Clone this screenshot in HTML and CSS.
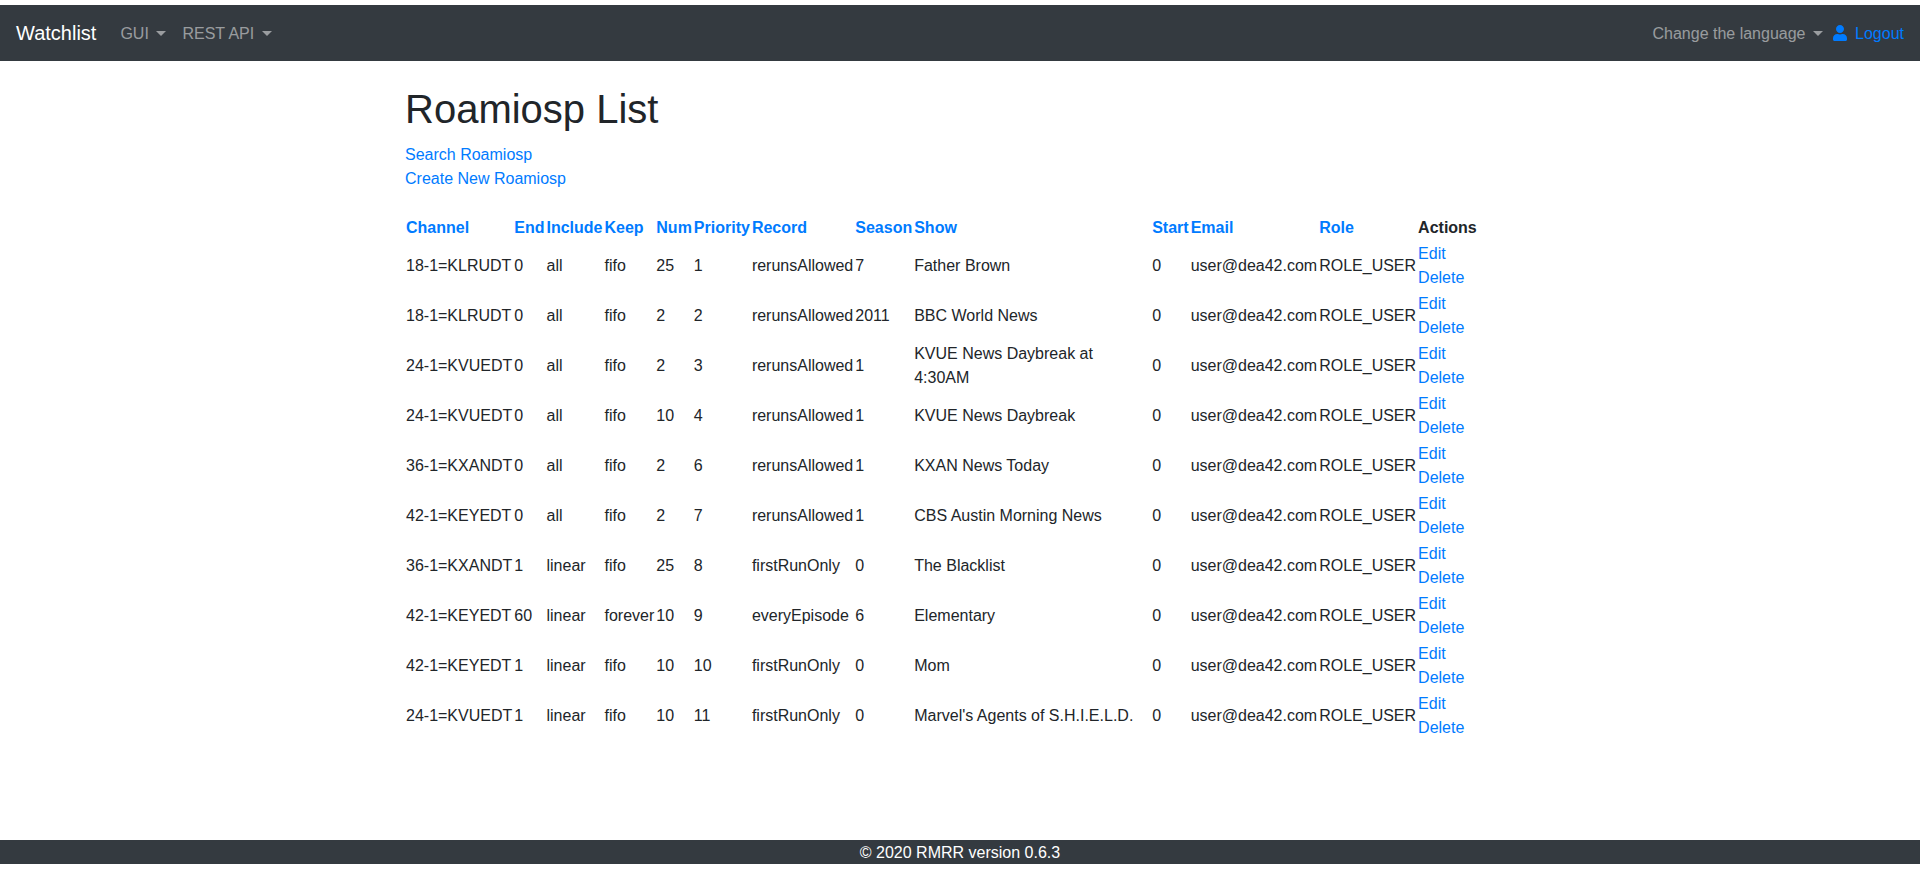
FILE: index.html
```html
<!DOCTYPE html>
<html>
  <head>
    <title>Roamiosp List</title>
    <link rel="stylesheet" href="styles.css">
  </head>
  <body>

	<nav class="navbar">
		<a class="brand" href="#">Watchlist</a>
		<ul class="nav-list">
			<li><a class="nav-link caret" href="#">GUI</a></li>
			<li><a class="nav-link caret" href="#">REST API</a></li>
		</ul>
		<ul class="nav-list nav-right">
			<li><a class="nav-link caret" href="#">Change the language</a></li>
			<li>
				<a class="logout" href="#">
					<svg class="user-icon" viewBox="0 0 448 512"><path d="M224 256c70.700 0 128-57.300 128-128S294.700 0 224 0 96 57.300 96 128s57.300 128 128 128zm89.600 32h-16.700c-22.200 10.200-46.900 16-72.900 16s-50.600-5.800-72.900-16h-16.700C60.200 288 0 348.200 0 422.400V464c0 26.500 21.500 48 48 48h352c26.500 0 48-21.500 48-48v-41.600c0-74.200-60.200-134.400-134.400-134.400z" fill="currentColor"/></svg>
					Logout
				</a>
			</li>
		</ul>
	</nav>

	<main class="container">
		<h1>Roamiosp List</h1>
		<div class="page-links">
			<a href="#">Search Roamiosp</a><br />
			<a href="#">Create New Roamiosp</a>
		</div>

		<table class="list">
			<thead>
				<tr>
					<th><a href="#">Channel</a></th>
					<th><a href="#">End</a></th>
					<th><a href="#">Include</a></th>
					<th><a href="#">Keep</a></th>
					<th><a href="#">Num</a></th>
					<th><a href="#">Priority</a></th>
					<th><a href="#">Record</a></th>
					<th><a href="#">Season</a></th>
					<th class="col-show"><a href="#">Show</a></th>
					<th><a href="#">Start</a></th>
					<th><a href="#">Email</a></th>
					<th><a href="#">Role</a></th>
					<th>Actions</th>
				</tr>
			</thead>
			<tbody>
				<tr>
					<td>18-1=KLRUDT</td><td>0</td><td>all</td><td>fifo</td><td>25</td><td>1</td><td>rerunsAllowed</td><td>7</td><td>Father Brown</td><td>0</td><td>user@dea42.com</td><td>ROLE_USER</td>
					<td><a href="#">Edit</a><br /><a href="#">Delete</a></td>
				</tr>
				<tr>
					<td>18-1=KLRUDT</td><td>0</td><td>all</td><td>fifo</td><td>2</td><td>2</td><td>rerunsAllowed</td><td>2011</td><td>BBC World News</td><td>0</td><td>user@dea42.com</td><td>ROLE_USER</td>
					<td><a href="#">Edit</a><br /><a href="#">Delete</a></td>
				</tr>
				<tr>
					<td>24-1=KVUEDT</td><td>0</td><td>all</td><td>fifo</td><td>2</td><td>3</td><td>rerunsAllowed</td><td>1</td><td>KVUE News Daybreak at 4:30AM</td><td>0</td><td>user@dea42.com</td><td>ROLE_USER</td>
					<td><a href="#">Edit</a><br /><a href="#">Delete</a></td>
				</tr>
				<tr>
					<td>24-1=KVUEDT</td><td>0</td><td>all</td><td>fifo</td><td>10</td><td>4</td><td>rerunsAllowed</td><td>1</td><td>KVUE News Daybreak</td><td>0</td><td>user@dea42.com</td><td>ROLE_USER</td>
					<td><a href="#">Edit</a><br /><a href="#">Delete</a></td>
				</tr>
				<tr>
					<td>36-1=KXANDT</td><td>0</td><td>all</td><td>fifo</td><td>2</td><td>6</td><td>rerunsAllowed</td><td>1</td><td>KXAN News Today</td><td>0</td><td>user@dea42.com</td><td>ROLE_USER</td>
					<td><a href="#">Edit</a><br /><a href="#">Delete</a></td>
				</tr>
				<tr>
					<td>42-1=KEYEDT</td><td>0</td><td>all</td><td>fifo</td><td>2</td><td>7</td><td>rerunsAllowed</td><td>1</td><td>CBS Austin Morning News</td><td>0</td><td>user@dea42.com</td><td>ROLE_USER</td>
					<td><a href="#">Edit</a><br /><a href="#">Delete</a></td>
				</tr>
				<tr>
					<td>36-1=KXANDT</td><td>1</td><td>linear</td><td>fifo</td><td>25</td><td>8</td><td>firstRunOnly</td><td>0</td><td>The Blacklist</td><td>0</td><td>user@dea42.com</td><td>ROLE_USER</td>
					<td><a href="#">Edit</a><br /><a href="#">Delete</a></td>
				</tr>
				<tr>
					<td>42-1=KEYEDT</td><td>60</td><td>linear</td><td>forever</td><td>10</td><td>9</td><td>everyEpisode</td><td>6</td><td>Elementary</td><td>0</td><td>user@dea42.com</td><td>ROLE_USER</td>
					<td><a href="#">Edit</a><br /><a href="#">Delete</a></td>
				</tr>
				<tr>
					<td>42-1=KEYEDT</td><td>1</td><td>linear</td><td>fifo</td><td>10</td><td>10</td><td>firstRunOnly</td><td>0</td><td>Mom</td><td>0</td><td>user@dea42.com</td><td>ROLE_USER</td>
					<td><a href="#">Edit</a><br /><a href="#">Delete</a></td>
				</tr>
				<tr>
					<td>24-1=KVUEDT</td><td>1</td><td>linear</td><td>fifo</td><td>10</td><td>11</td><td>firstRunOnly</td><td>0</td><td>Marvel's Agents of S.H.I.E.L.D.</td><td>0</td><td>user@dea42.com</td><td>ROLE_USER</td>
					<td><a href="#">Edit</a><br /><a href="#">Delete</a></td>
				</tr>
			</tbody>
		</table>
	</main>

	<footer class="footer">&copy; 2020 RMRR version 0.6.3</footer>

  </body>
</html>
```

FILE: styles.css
```css
html, body { height: 100%; }
body { margin: 0; padding: 5px 0 10px; box-sizing: border-box; display: flex; flex-direction: column; background: #fff; color: #212529; font-family: "Liberation Sans", Arial, sans-serif; font-size: 16px; line-height: 1.5; }
a { color: #007bff; text-decoration: none; }

.navbar { display: flex; align-items: center; height: 56px; box-sizing: border-box; padding: 8px 16px; background: #343a40; }
.brand { color: #fff; font-size: 20px; line-height: 30px; margin-right: 16px; padding: 5px 0; }
.nav-list { display: flex; align-items: center; list-style: none; margin: 0; padding: 0; }
.nav-right { margin-left: auto; }
.nav-link { display: block; padding: 9px 8px 7px; color: rgba(255, 255, 255, 0.5); }
.caret::after { content: ""; display: inline-block; margin-left: 7.6px; vertical-align: 3px; border-top: 5px solid; border-right: 5px solid transparent; border-left: 5px solid transparent; }
.logout { display: block; margin-left: 2px; padding-top: 2px; }
.user-icon { width: 14px; height: 16px; margin-right: 3.5px; vertical-align: -2px; }

.container { flex: 1; width: 1140px; box-sizing: border-box; margin: 0 auto; padding: 24px 15px 0; }
h1 { margin: 0 0 10px; font-size: 40px; font-weight: 500; line-height: 1.2; }
.page-links { margin-bottom: 24px; }

.list { border-collapse: collapse; }
.list th { padding: 1px; text-align: left; font-weight: 700; }
.list td { padding: 1px; }
.col-show { width: 236px; }

.footer { height: 24px; padding-top: 1px; box-sizing: border-box; line-height: 24px; background: #343a40; color: #fff; text-align: center; }
```
